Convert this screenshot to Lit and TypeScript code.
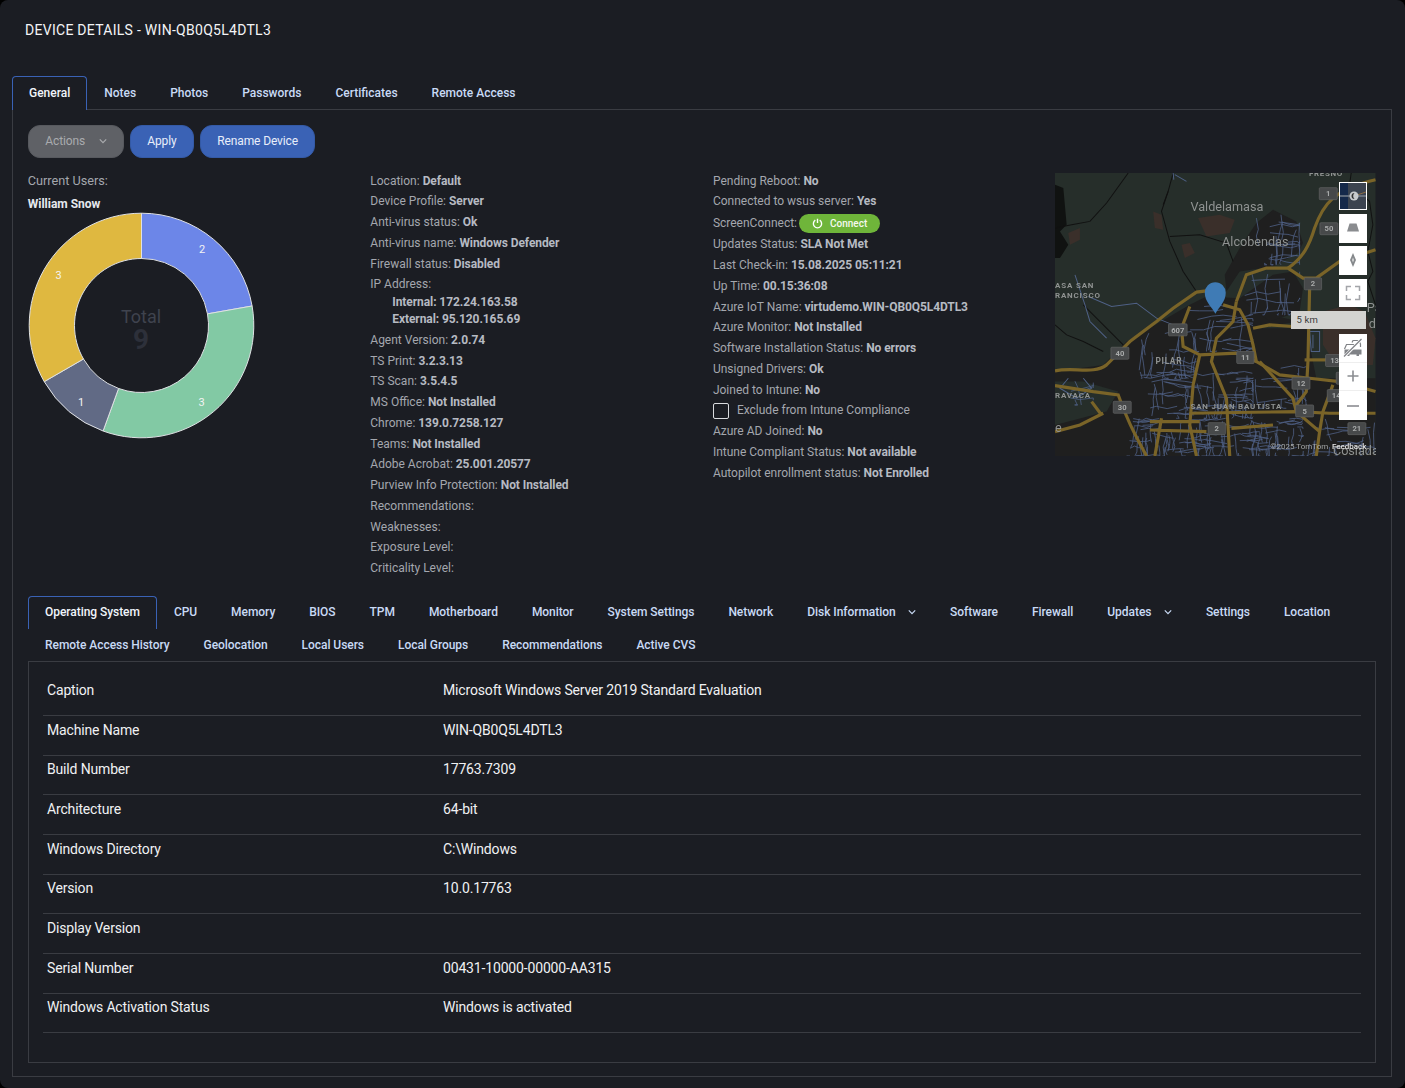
import { LitElement, html, css, svg } from 'lit';
import { customElement } from 'lit/decorators.js';

type Info = [string, string?];

const col2a: Info[] = [
  ['Location:', 'Default'],
  ['Device Profile:', 'Server'],
  ['Anti-virus status:', 'Ok'],
  ['Anti-virus name:', 'Windows Defender'],
  ['Firewall status:', 'Disabled'],
];
const col2b: Info[] = [
  ['Agent Version:', '2.0.74'],
  ['TS Print:', '3.2.3.13'],
  ['TS Scan:', '3.5.4.5'],
  ['MS Office:', 'Not Installed'],
  ['Chrome:', '139.0.7258.127'],
  ['Teams:', 'Not Installed'],
  ['Adobe Acrobat:', '25.001.20577'],
  ['Purview Info Protection:', 'Not Installed'],
  ['Recommendations:'],
  ['Weaknesses:'],
  ['Exposure Level:'],
  ['Criticality Level:'],
];
const col3a: Info[] = [
  ['Pending Reboot:', 'No'],
  ['Connected to wsus server:', 'Yes'],
];
const col3b: Info[] = [
  ['Updates Status:', 'SLA Not Met'],
  ['Last Check-in:', '15.08.2025 05:11:21'],
  ['Up Time:', '00.15:36:08'],
  ['Azure IoT Name:', 'virtudemo.WIN-QB0Q5L4DTL3'],
  ['Azure Monitor:', 'Not Installed'],
  ['Software Installation Status:', 'No errors'],
  ['Unsigned Drivers:', 'Ok'],
  ['Joined to Intune:', 'No'],
];
const col3c: Info[] = [
  ['Azure AD Joined:', 'No'],
  ['Intune Compliant Status:', 'Not available'],
  ['Autopilot enrollment status:', 'Not Enrolled'],
];

const topTabs = ['General', 'Notes', 'Photos', 'Passwords', 'Certificates', 'Remote Access'];
const subTabs: [string, boolean?][] = [
  ['Operating System'], ['CPU'], ['Memory'], ['BIOS'], ['TPM'], ['Motherboard'], ['Monitor'],
  ['System Settings'], ['Network'], ['Disk Information', true], ['Software'], ['Firewall'],
  ['Updates', true], ['Settings'], ['Location'],
];
const subTabs2 = ['Remote Access History', 'Geolocation', 'Local Users', 'Local Groups', 'Recommendations', 'Active CVS'];

const rows = [
  ['Caption', 'Microsoft Windows Server 2019 Standard Evaluation'],
  ['Machine Name', 'WIN-QB0Q5L4DTL3'],
  ['Build Number', '17763.7309'],
  ['Architecture', '64-bit'],
  ['Windows Directory', 'C:\\Windows'],
  ['Version', '10.0.17763'],
  ['Display Version', ''],
  ['Serial Number', '00431-10000-00000-AA315'],
  ['Windows Activation Status', 'Windows is activated'],
];

// donut slices: value, colour, label offset from the centre
const slices: [number, string, number, number][] = [
  [2, '#6c86e8', 60.5, -77],
  [3, '#82c9a4', 60, 76],
  [1, '#616a85', -60.5, 76],
  [3, '#dfb840', -83, -50.5],
];
const CX = 113.5;
const CY = 113.5;

const polar = (r: number, deg: number) => {
  const a = (deg * Math.PI) / 180;
  return [CX + r * Math.sin(a), CY - r * Math.cos(a)];
};

function donut() {
  const total = slices.reduce((s, x) => s + x[0], 0);
  let at = 0;
  return slices.map(([v, color, ox, oy]) => {
    const start = (at / total) * 360;
    at += v;
    const end = (at / total) * 360;
    const large = end - start > 180 ? 1 : 0;
    const [x1, y1] = polar(112.3, start);
    const [x2, y2] = polar(112.3, end);
    const [x3, y3] = polar(67, end);
    const [x4, y4] = polar(67, start);
    return svg`
      <path d="M${x1} ${y1}A112.300 112.300 0 ${large} 1 ${x2} ${y2}L${x3} ${y3}A67 67 0 ${large} 0 ${x4} ${y4}Z"
        fill=${color} stroke="#dfe1e4" stroke-width="1"></path>
      <text x=${CX + ox} y=${CY + oy + 4} text-anchor="middle" font-size="11" fill="#f3f3f3">${v}</text>`;
  });
}

// map geometry is in 3x coordinates, the viewBox scales it back
const urban = [
  'M45 620L190 600 260 530 450 420 500 395 600 400 690 450 780 470 640 490 800 490 830 640 1008 640V873H45V780L200 740 235 680 130 650 45 650Z',
  'M560 380L600 320 700 305 775 265 790 235 770 170 700 135 650 175 600 250 555 330Z',
  'M600 400L700 330 760 320 790 370 780 440 690 470Z',
];
const brownish = [
  'M475 160L540 150 585 165 570 205 500 215Z',
  'M425 240L450 235 465 265 435 280Z',
  'M340 140L365 150 370 195 345 190Z',
  'M850 440L930 420 975 440 1008 520 1000 600 890 600 850 540Z',
  'M85 205L120 190 120 225 90 240Z',
];
const minor = [
  'M145 395L215 425 290 415 350 460 400 480',
  'M105 330L135 420 150 470 200 520',
  'M810 500H840V560H815ZM820 510V550',
  'M440 50L405 30M400 25L402 45',
  'M130 640L155 670 110 700 60 670 85 640',
];

// small seeded generator so the street tangle stays the same on every load
function streets() {
  let seed = 1234567;
  const rnd = () => {
    seed = (seed + 0x6d2b79f5) | 0;
    let t = Math.imul(seed ^ (seed >>> 15), 1 | seed);
    t = (t + Math.imul(t ^ (t >>> 7), 61 | t)) ^ t;
    return ((t ^ (t >>> 14)) >>> 0) / 4294967296;
  };
  const zones: [number, number, number, number, number, number][] = [
    [650, 140, 780, 300, 22, 26],
    [610, 320, 780, 450, 16, 34],
    [450, 420, 640, 560, 20, 30],
    [280, 500, 470, 640, 26, 28],
    [300, 620, 640, 760, 60, 24],
    [640, 600, 800, 730, 16, 28],
    [260, 760, 790, 873, 110, 18],
    [790, 760, 1008, 873, 18, 26],
    [60, 640, 160, 720, 5, 30],
  ];
  let d = '';
  for (const [x0, y0, x1, y1, n, step] of zones) {
    for (let i = 0; i < n; i++) {
      let x = x0 + rnd() * (x1 - x0);
      let y = y0 + rnd() * (y1 - y0);
      d += `M${x.toFixed(0)} ${y.toFixed(0)}`;
      const horizontal = rnd() > 0.5;
      for (let k = 0; k < 3; k++) {
        const along = step * (0.6 + rnd());
        const across = (rnd() - 0.5) * step * 0.7;
        x = Math.min(x1, Math.max(x0, x + (horizontal ? along : across)));
        y = Math.min(y1, Math.max(y0, y + (horizontal ? across : along)));
        d += `L${x.toFixed(0)} ${y.toFixed(0)}`;
      }
    }
  }
  return d;
}
const streetPath = streets();

const majors = [
  'M45 618C100 605 160 630 200 600L270 530 350 470 400 430 470 382 500 378',
  'M550 420L600 435 625 480 640 540 650 590 720 630 810 640 900 650 1008 680',
  'M45 662L160 680 235 690C260 760 280 800 320 873',
  'M45 800L120 780 190 745M155 710L185 750',
  'M450 425L425 490 430 545 480 570 590 565 650 590',
  'M480 570L460 660 450 780 470 873',
  'M590 410L580 470 530 520 515 590 560 700 570 873',
  'M590 410L620 330 680 310 745 310 790 340 830 340 900 290 1008 255',
  'M745 310C790 280 810 240 825 190 850 120 880 75 1008 45',
  'M810 370L805 590 800 680 770 720 770 740',
  'M640 490L690 480 760 485',
  'M330 770H480M330 795L500 800M365 760L345 873',
  'M450 745L640 742 770 740 870 745 1008 745',
  'M660 590L760 700 770 740 840 800 830 873M880 660L850 740 840 800',
  'M795 585H860',
  'M575 790L700 780',
];
const blackLines = [
  'M45 190L95 180 150 170 200 115 265 25',
  'M370 120L385 80 400 25',
  'M385 80L365 140 390 230 430 320 470 380',
  'M390 215L480 210 560 235 580 290',
  'M45 480L80 510 130 530 190 560',
  'M130 420L190 480 250 540',
  'M935 25L930 60 990 110 1000 180 985 260 1000 320 985 350 1008 420',
];
const shields: [number, number, string, number?][] = [
  [866, 87, '1'], [868, 192, '50', 54], [820, 357, '2', 52], [414, 495, '607', 56], [240, 565, '40', 54],
  [617, 578, '11', 52], [784, 655, '12', 54], [885, 587, '13', 54], [890, 692, '14', 54], [247, 727, '30', 54],
  [795, 738, '5', 54], [531, 791, '2', 52], [952, 791, '21', 54], [915, 640, '', 50],
];
const labels: [number, number, string, number, number?][] = [
  [808, 33, 'FRESNO', 24, 2],
  [452, 139, 'Valdelamasa', 38],
  [547, 245, 'Alcobendas', 38],
  [45, 369, 'ASA SAN', 24, 2.5],
  [45, 399, 'RANCISCO', 24, 2.5],
  [347, 597, 'PILAR', 25, 2],
  [45, 700, 'RAVACA', 24, 2.5],
  [452, 731, 'SAN JUAN BAUTISTA', 24, 2.4],
  [45, 800, 'e', 38],
  [982, 442, 'Pa', 38],
  [988, 489, 'd', 38],
  [880, 871, 'Cosiada', 38],
];

function mapArt() {
  return svg`
    <svg class="art" viewBox="45 25 963 848" preserveAspectRatio="none">
      <rect x="45" y="25" width="963" height="848" fill="#262e2a"></rect>
      <path d="M45 60L70 70 80 180 60 200 85 240 60 280H45Z" fill="#101211"></path>
      ${brownish.map((d) => svg`<path d=${d} fill="#3a2f2a"></path>`)}
      ${urban.map((d) => svg`<path d=${d} fill="#1f1f1f"></path>`)}
      ${blackLines.map((d) => svg`<path d=${d} fill="none" stroke="#111" stroke-width="3"></path>`)}
      <path d=${streetPath} fill="none" stroke="#4f6186" stroke-width="2.400"></path>
      ${minor.map((d) => svg`<path d=${d} fill="none" stroke="#4f6186" stroke-width="3"></path>`)}
      ${majors.map((d) => svg`<path d=${d} fill="none" stroke="#7a6428" stroke-width="9.500"></path>`)}
      ${labels.map(([x, y, t, size, ls]) => svg`
        <text x=${x} y=${y} font-size=${size} fill="#8f9291" font-weight=${size < 30 ? 700 : 400}
          letter-spacing=${ls ?? 0}>${t}</text>`)}
      ${shields.map(([x, y, t, w]) => {
        const wd = w ?? 54;
        return svg`
          <rect x=${x - wd / 2} y=${y - 18} width=${wd} height="36" rx="3" fill="#47494a" stroke="#636565" stroke-width="2"></rect>
          <text x=${x} y=${y + 8} text-anchor="middle" font-size="23" font-weight="700" fill="#a9abab">${t}</text>`;
      })}
      <path d="M527 447C515 425 495 410 495 384A31.500 32 0 0 1 558 384C558 410 539 425 527 447Z" fill="#3f7bb5"></path>
      <text x="692" y="852" font-size="24" fill="#a3a5a5">©2025 TomTom</text>
      <text x="877" y="852" font-size="24" font-weight="500" fill="#e4e4e4">Feedback</text>
    </svg>`;
}

const chevron = html`<svg class="chev" viewBox="0 0 10 6"><path d="M1 1l4 4 4-4" fill="none" stroke="currentColor" stroke-width="1.500"></path></svg>`;

@customElement('app-root')
export class AppRoot extends LitElement {
  static styles = css`
    :host {
      display: block;
      width: 1405px;
      height: 1088px;
      background: #000;
      font-family: Roboto, "Liberation Sans", sans-serif;
      font-size: 12px;
      color: #a4a7ae;
    }
    .modal {
      box-sizing: border-box;
      height: 1088px;
      background: #1b1d23;
      border-radius: 8px;
      padding: 0 13px 11px 12px;
      display: flex;
      flex-direction: column;
    }
    .title {
      height: 76px;
      box-sizing: border-box;
      padding: 21px 0 0 13px;
      font-size: 14px;
      letter-spacing: 0.280px;
      line-height: 18px;
      color: #f3f4f6;
    }
    .tabs {
      display: flex;
      flex-wrap: wrap;
      position: relative;
      z-index: 1;
    }
    .tab {
      display: flex;
      align-items: center;
      gap: 13px;
      height: 34px;
      box-sizing: border-box;
      padding: 0 17px 1px;
      font-weight: 500;
      color: #c9daf5;
      white-space: nowrap;
    }
    .tab.on {
      color: #f1f5fb;
      border: 1px solid #3a62b5;
      border-bottom: 0;
      border-radius: 4px 4px 0 0;
      background: #1b1d23;
      padding: 0 16px 2px;
    }
    .panel {
      flex: 1;
      margin-top: -1px;
      border: 1px solid #3a3c42;
      padding: 15px 15px 13px;
      display: flex;
      flex-direction: column;
      min-height: 0;
    }
    .toolbar {
      display: flex;
      gap: 6px;
      height: 33px;
    }
    .btn {
      display: flex;
      align-items: center;
      box-sizing: border-box;
      height: 33px;
      padding: 0 16.300px 2px;
      border-radius: 12px;
      border: 1px solid #345aa6;
      background: #3a62b5;
      color: #e8eefa;
      letter-spacing: -0.010em;
    }
    .btn.grey {
      width: 96px;
      background: #5f6166;
      border-color: #57595e;
      color: #a9abae;
      justify-content: space-between;
      padding-right: 16px;
    }
    .grid {
      display: grid;
      grid-template-columns: repeat(3, 342.6px) 1fr;
      margin-top: 12.600px;
      margin-left: -0.300px;
    }
    .line {
      height: 20.750px;
      line-height: 20.750px;
      white-space: nowrap;
    }
    .line b,
    .sub b {
      font-weight: 700;
      color: #b6bac2;
      letter-spacing: -0.080px;
    }
    .users {
      font-size: 12.700px;
    }
    .user {
      font-weight: 700;
      color: #e6e9ee;
      margin-top: 2.200px;
    }
    .donut {
      display: block;
      width: 227px;
      height: 227px;
      overflow: visible;
    }
    .chart {
      position: relative;
      width: 227px;
      height: 227px;
      margin-left: -0.200px;
      margin-top: -2.600px;
    }
    .total {
      position: absolute;
      left: 0;
      right: 0;
      top: 94.500px;
      text-align: center;
      color: #3f434e;
      font-size: 18px;
      line-height: 22px;
    }
    .total strong {
      display: block;
      font-size: 28px;
      line-height: 23px;
      font-weight: 700;
      color: #2d303a;
    }
    .sub {
      padding: 0 0 1.700px 22px;
      line-height: 17px;
      margin-top: -1px;
    }
    .sc {
      display: flex;
      align-items: center;
      height: 22.300px;
    }
    .connect {
      display: inline-flex;
      align-items: center;
      gap: 7px;
      box-sizing: border-box;
      height: 19px;
      width: 81px;
      margin-left: 2px;
      padding-left: 13px;
      border-radius: 10px;
      background: #6fb53a;
      color: #f5f9f0;
      font-size: 10px;
      font-weight: 500;
      line-height: 19px;
    }
    .connect svg {
      width: 11px;
      height: 11px;
    }
    .check {
      display: flex;
      align-items: center;
      gap: 8px;
    }
    .box {
      width: 14px;
      height: 14px;
      border: 1px solid #d9dbde;
      border-radius: 2px;
    }
    .map {
      position: relative;
      height: 283px;
      margin-top: 2.400px;
      overflow: hidden;
      font-family: Roboto, sans-serif;
    }
    .art {
      display: block;
      width: 100%;
      height: 100%;
      filter: blur(0.300px);
    }
    .ctrl {
      position: absolute;
      left: 284px;
      width: 28px;
      background: #fff;
      display: flex;
      align-items: center;
      justify-content: center;
    }
    .ctrl svg {
      width: 20px;
      height: 20px;
    }
    .style {
      top: 9px;
      height: 28px;
      box-sizing: border-box;
      border: 1px solid #fff;
      background: #3c4450;
    }
    .style svg {
      width: 26px;
      height: 26px;
    }
    .scale {
      position: absolute;
      left: 236px;
      top: 138px;
      width: 75px;
      height: 18px;
      box-sizing: border-box;
      padding-left: 5px;
      background: #d3d3d0;
      color: #3a3a3a;
      font-size: 9.500px;
      letter-spacing: 0.200px;
      line-height: 18px;
    }
    .group {
      top: 161px;
      height: 86px;
      flex-direction: column;
    }
    .group div {
      width: 28px;
      height: 28.600px;
      display: flex;
      align-items: center;
      justify-content: center;
      border-bottom: 1px solid #eee;
      box-sizing: border-box;
    }
    .group div:last-child {
      border-bottom: 0;
    }
    .subtabs {
      margin: 17.400px 0 -1px;
      letter-spacing: -0.004em;
    }
    .subtabs .tab {
      height: 33px;
      padding-bottom: 2px;
      gap: 12.500px;
    }
    .subtabs .tab.on {
      padding-bottom: 3px;
    }
    .chev {
      width: 8px;
      height: 6px;
      flex: none;
    }
    .table {
      flex: 1;
      border: 1px solid #3a3c42;
      padding: 14.300px 14px 30px;
      min-height: 0;
    }
    .row {
      display: grid;
      grid-template-columns: 396px 1fr;
      box-sizing: border-box;
      height: 39.650px;
      padding: 3.700px 4px 0;
      border-bottom: 1px solid #3a3c42;
      font-size: 14px;
      letter-spacing: -0.160px;
      line-height: 20px;
      color: #f0f1f3;
    }
  `;

  line(i: Info) {
    return html`<div class="line">${i[0]}${i[1] ? html` <b>${i[1]}</b>` : ''}</div>`;
  }

  render() {
    return html`
      <div class="modal">
        <div class="title">DEVICE DETAILS - WIN-QB0Q5L4DTL3</div>
        <div class="tabs">
          ${topTabs.map((t, i) => html`<div class="tab ${i === 0 ? 'on' : ''}">${t}</div>`)}
        </div>
        <div class="panel">
          <div class="toolbar">
            <div class="btn grey">Actions ${chevron}</div>
            <div class="btn">Apply</div>
            <div class="btn">Rename Device</div>
          </div>
          <div class="grid">
            <div>
              <div class="line users">Current Users:</div>
              <div class="line user">William Snow</div>
              <div class="chart">
                <svg class="donut" viewBox="0 0 227 227" font-family="Roboto, sans-serif">${donut()}</svg>
                <div class="total">Total<strong>9</strong></div>
              </div>
            </div>
            <div>
              ${col2a.map((i) => this.line(i))}
              <div class="line">IP Address:</div>
              <div class="sub">
                <div><b>Internal: 172.24.163.58</b></div>
                <div><b>External: 95.120.165.69</b></div>
              </div>
              ${col2b.map((i) => this.line(i))}
            </div>
            <div>
              ${col3a.map((i) => this.line(i))}
              <div class="line sc">ScreenConnect:<span class="connect">
                <svg viewBox="0 0 12 12"><path d="M3.600 2.400a4.500 4.500 0 1 0 4.800 0M6 .8v4.600" fill="none" stroke="#fff" stroke-width="1.500"></path></svg>Connect</span></div>
              ${col3b.map((i) => this.line(i))}
              <div class="line check"><span class="box"></span>Exclude from Intune Compliance</div>
              ${col3c.map((i) => this.line(i))}
            </div>
            <div class="map">
              ${mapArt()}
              <div class="ctrl style">
                <svg viewBox="0 0 26 26">
                  <rect width="8" height="26" fill="#15294a"></rect>
                  <path d="M0 13h26" stroke="#77808c" stroke-width="1.500"></path>
                  <path d="M17 12l9-3" stroke="#8a6d45" stroke-width="1"></path>
                  <circle cx="14" cy="13" r="4.500" fill="#c8cacc"></circle>
                  <path d="M14.500 10a3 3 0 0 0 0 6 4.500 4.500 0 0 1 0-6z" fill="#333"></path>
                </svg>
              </div>
              <div class="ctrl" style="top:41px;height:29px">
                <svg viewBox="0 0 20 20"><path d="M6.500 5.500h7L16 13.500H4z" fill="#8a8c8f"></path></svg>
              </div>
              <div class="ctrl" style="top:73px;height:29px">
                <svg viewBox="0 0 20 20"><path d="M10 3l3 7-3 7-3-7z" fill="#85888b"></path><path d="M10 7.500l1 2.500-1 2.500-1-2.500z" fill="#d8d9da"></path></svg>
              </div>
              <div class="ctrl" style="top:106px;height:28px">
                <svg viewBox="0 0 20 20"><path d="M3.500 8V3.500H8M12 3.500h4.500V8M16.500 12v4.500H12M8 16.500H3.500V12" fill="none" stroke="#a3a5a9" stroke-width="1.500"></path></svg>
              </div>
              <div class="scale">5 km</div>
              <div class="ctrl group">
                <div>
                  <svg viewBox="0 0 20 20">
                    <path d="M9 4.500l1-2h6l1.500 3.500v3" fill="none" stroke="#808286" stroke-width="1.200"></path>
                    <path d="M1.500 11l2-4.500h7L12 9" fill="none" stroke="#808286" stroke-width="1.200"></path>
                    <path d="M4 18v-1.500H1.500v-5h17v5H16V18h-2.500v-1.500h-7V18z" fill="#808286"></path>
                    <path d="M1.500 18.500L18 1.500" stroke="#fff" stroke-width="3"></path>
                    <path d="M1 18.500L18.500 1" stroke="#808286" stroke-width="1.300"></path>
                  </svg>
                </div>
                <div>
                  <svg viewBox="0 0 20 20"><path d="M10 4.500v11M4.500 10h11" stroke="#8b8d91" stroke-width="1.600"></path></svg>
                </div>
                <div>
                  <svg viewBox="0 0 20 20"><path d="M4 10h12" stroke="#8b8d91" stroke-width="1.600"></path></svg>
                </div>
              </div>
            </div>
          </div>
          <div class="tabs subtabs">
            ${subTabs.map(([t, c], i) => html`<div class="tab ${i === 0 ? 'on' : ''}">${t}${c ? chevron : ''}</div>`)}
            ${subTabs2.map((t) => html`<div class="tab">${t}</div>`)}
          </div>
          <div class="table">
            ${rows.map((r) => html`<div class="row"><div>${r[0]}</div><div>${r[1]}</div></div>`)}
          </div>
        </div>
      </div>
    `;
  }
}
